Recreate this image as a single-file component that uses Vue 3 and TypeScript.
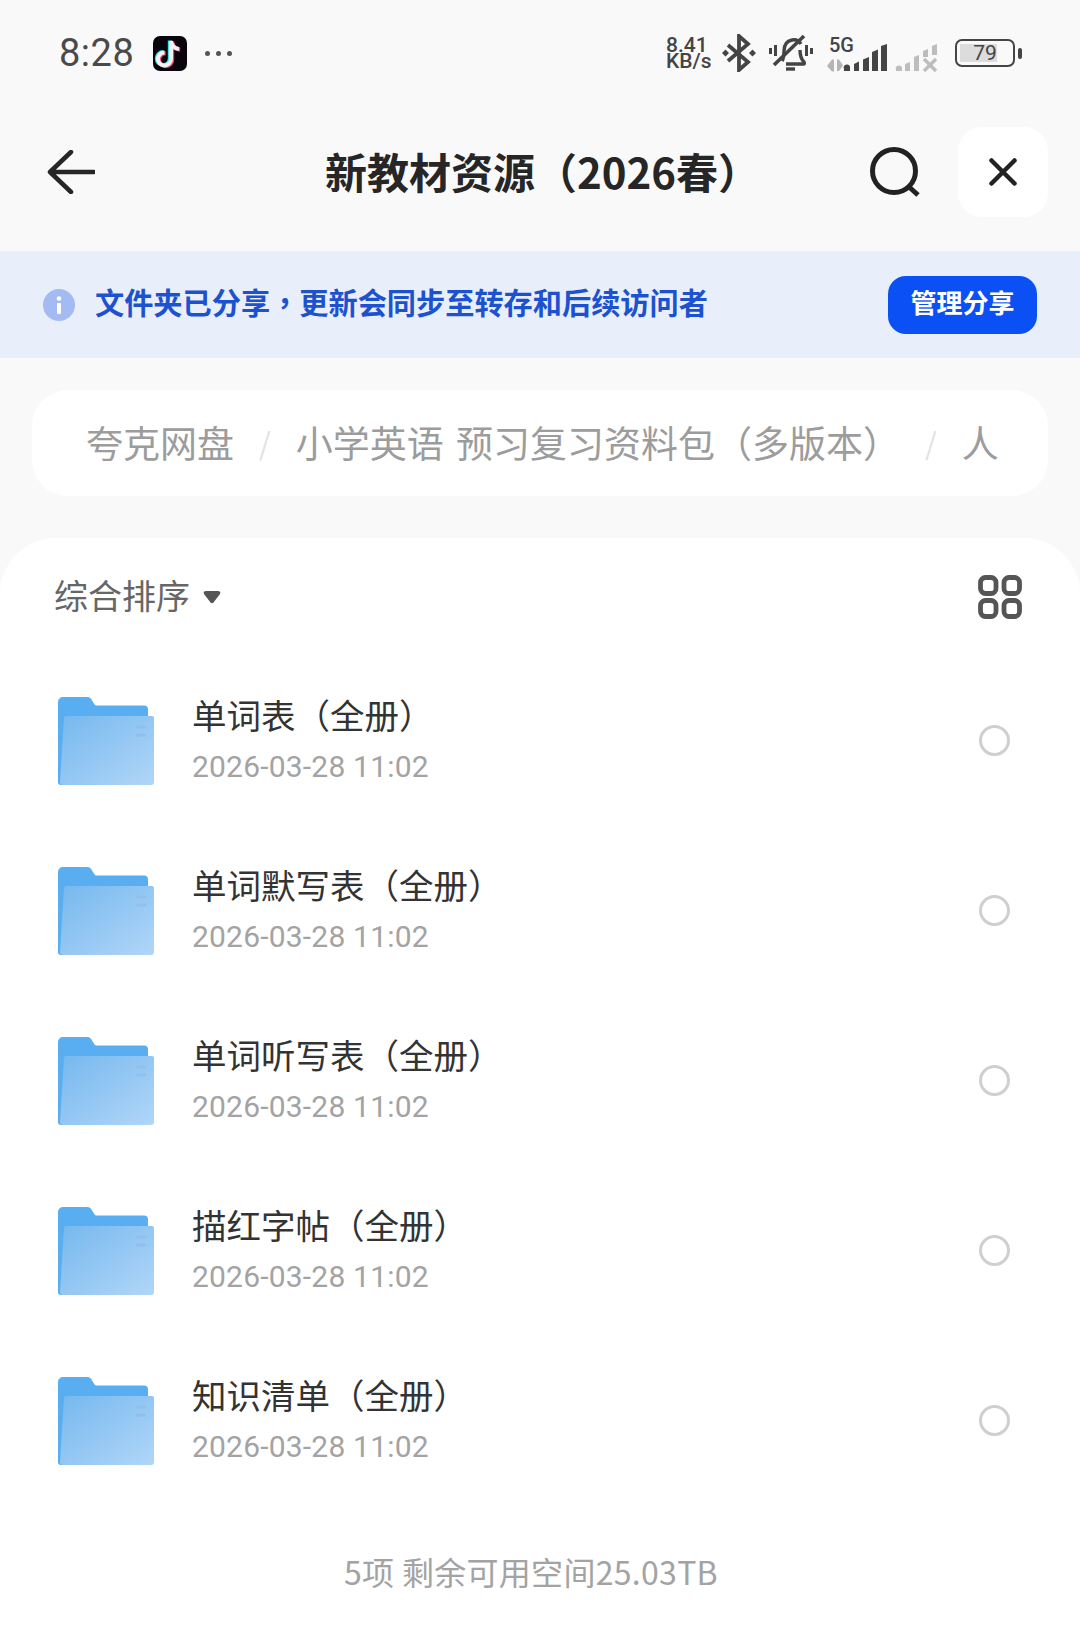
<script setup lang="ts">
const crumbs = ['夸克网盘', '小学英语 预习复习资料包（多版本）', '人']

const folders = [
  { name: '单词表（全册）', time: '2026-03-28 11:02' },
  { name: '单词默写表（全册）', time: '2026-03-28 11:02' },
  { name: '单词听写表（全册）', time: '2026-03-28 11:02' },
  { name: '描红字帖（全册）', time: '2026-03-28 11:02' },
  { name: '知识清单（全册）', time: '2026-03-28 11:02' },
]
</script>

<template>
  <div class="page">
    <div class="status-bar">
      <div class="status-left">
        <span class="clock">8:28</span>
        <svg class="tiktok" width="34" height="35" viewBox="0 0 34 35">
          <rect width="34" height="35" rx="7" fill="#08060c" />
          <g fill="none" stroke-width="4">
            <path d="M18 5v18a6.500 6.500 0 1 1-6.500-6.500M18 5c.6 4.500 3.500 7.500 8 8" stroke="#3fe0e6" transform="translate(-1.200 -.5)" />
            <path d="M18 5v18a6.500 6.500 0 1 1-6.500-6.500M18 5c.6 4.500 3.500 7.500 8 8" stroke="#f0406a" transform="translate(1.200 .8)" />
            <path d="M18 5v18a6.500 6.500 0 1 1-6.500-6.500M18 5c.6 4.500 3.500 7.500 8 8" stroke="#f6f1f3" />
          </g>
        </svg>
        <span class="dots"><i></i><i></i><i></i></span>
      </div>
      <div class="status-right">
        <div class="speed">8.41 KB/s</div>
        <svg class="bt" width="34" height="38" viewBox="0 0 34 38">
          <path d="M6 11l20 17-9 8V2l9 8L6 27" fill="none" stroke="#444" stroke-width="3.800" />
          <path d="M3.500 15.500L7 19l-3.500 3.500L0 19zM30.500 15.500L34 19l-3.500 3.500L27 19z" fill="#444" />
        </svg>
        <svg class="bell" width="44" height="38" viewBox="0 0 44 38">
          <path d="M13 27c2-3 2-6 2-10 0-6 3-10 8-11 4-1 7 1 9 4M31 16c0 5 1 9 4 12 1 2 0 2-2 2H17" fill="none" stroke="#444" stroke-width="3.400" />
          <path d="M5 31L35 2" stroke="#444" stroke-width="3.600" />
          <path d="M17 35h9" stroke="#444" stroke-width="3.400" />
          <path d="M1.500 14v6M6.500 11v11M37.500 11v11M42.500 14v6" stroke="#444" stroke-width="3" />
        </svg>
        <div class="sim">
          <span class="net">5G</span>
          <svg width="61" height="28" viewBox="0 0 61 28">
            <path d="M7 15.500v12H5l-5-5.500 5-6.500zM10 15.500h2l4 6-4 5.500h-2z" fill="#b5b5b5" />
            <path d="M17 27v-2a3 3 0 0 1 6-2.500V27zM27 20l5-2.500V27h-5zM36 15.500l6-2.500V27h-6zM45 8l6-2.500V27h-6zM54 2l6-2V27h-6z" fill="#444" />
          </svg>
        </div>
        <svg class="sim2" width="44" height="28" viewBox="0 0 44 28">
          <path d="M2 27v-1a3 3 0 0 1 6-2.500V27zM11 20l5-2v9h-5zM20 13l5-2v16h-5zM29 7l5-2v8h-5zM38 2l5-2v11h-5z" fill="#bdbdbd" />
          <path d="M30 15l12 12M42 15L30 27" stroke="#bdbdbd" stroke-width="3.400" />
        </svg>
        <div class="battery">
          <div class="cell"><span class="fill"></span><span class="level">79</span></div>
          <span class="tip"></span>
        </div>
      </div>
    </div>

    <header class="nav">
      <svg class="back" width="48" height="44" viewBox="0 0 48 44">
        <path d="M24 2L3 22l21 20M4 22h43" fill="none" stroke="#262626" stroke-width="4.500" stroke-linecap="round" stroke-linejoin="round" />
      </svg>
      <h1 class="title">新教材资源（2026春）</h1>
      <svg class="search" width="50" height="50" viewBox="0 0 50 50">
        <circle cx="24" cy="24" r="21.500" fill="none" stroke="#222" stroke-width="5" />
        <path d="M38 39l10 9" stroke="#222" stroke-width="5" />
      </svg>
      <button class="close" type="button" aria-label="关闭">
        <svg width="28" height="28" viewBox="0 0 28 28">
          <path d="M2.500 2.500l23 23M25.500 2.500l-23 23" stroke="#222" stroke-width="4.500" stroke-linecap="round" />
        </svg>
      </button>
    </header>

    <div class="banner">
      <svg width="32" height="32" viewBox="0 0 32 32">
        <circle cx="16" cy="16" r="16" fill="#a3baf3" />
        <rect x="14" y="14" width="4" height="11" rx="1" fill="#fff" />
        <circle cx="16" cy="9.500" r="2.300" fill="#fff" />
      </svg>
      <span class="banner-text">文件夹已分享<span class="mid-comma">，</span>更新会同步至转存和后续访问者</span>
      <button class="manage" type="button">管理分享</button>
    </div>

    <nav class="crumbs">
      <template v-for="(crumb, i) in crumbs" :key="crumb">
        <span v-if="i > 0" class="sep">/</span>
        <span class="crumb">{{ crumb }}</span>
      </template>
    </nav>

    <main class="sheet">
      <div class="toolbar">
        <div class="sort">
          <span class="sort-label">综合排序</span>
          <svg width="18" height="14" viewBox="0 0 18 14">
            <path d="M3 1h12c2 0 3 1.500 2 3l-6.500 8.500c-.8 1-2.200 1-3 0L1 4C0 2.500 1 1 3 1z" fill="#555" />
          </svg>
        </div>
        <svg width="44" height="44" viewBox="0 0 44 44">
          <g fill="none" stroke="#555" stroke-width="4.800">
            <rect x="2.500" y="2.500" width="15.500" height="16" rx="5" />
            <rect x="26" y="2.500" width="15.500" height="16" rx="5" />
            <rect x="2.500" y="25.500" width="15.500" height="16" rx="5" />
            <rect x="26" y="25.500" width="15.500" height="16" rx="5" />
          </g>
        </svg>
      </div>

      <ul class="list">
        <li v-for="folder in folders" :key="folder.name" class="row">
          <svg class="folder" width="96" height="88" viewBox="0 0 96 88">
            <defs>
              <linearGradient id="front" x1="0" y1="0" x2="1" y2="1">
                <stop offset="0" stop-color="#76b8ee" />
                <stop offset="1" stop-color="#b1d6f8" />
              </linearGradient>
            </defs>
            <path d="M0 5a5 5 0 0 1 5-5h24c3 0 4 1.500 5 3.500l2 3c.6 1.500 1.500 2 3 2h47a4 4 0 0 1 4 4V40H6v48H3a3 3 0 0 1-3-3z" fill="#58aef0" />
            <path d="M6 21a2 2 0 0 1 2-2h86a2 2 0 0 1 2 2v64a3 3 0 0 1-3 3H5a3 3 0 0 1-3-3z" fill="url(#front)" />
            <path d="M78 30h10M78 38h10" stroke="#8fc1ec" stroke-width="3" />
          </svg>
          <div class="info">
            <p class="name">{{ folder.name }}</p>
            <p class="time">{{ folder.time }}</p>
          </div>
          <span class="radio"></span>
        </li>
      </ul>

      <p class="summary">5项 剩余可用空间25.03TB</p>
    </main>
  </div>
</template>

<style>
html,
body {
  margin: 0;
  background: #f9f9f9;
}
</style>

<style scoped>
.page {
  width: 1080px;
  height: 1632px;
  display: flex;
  flex-direction: column;
  overflow: hidden;
  background: #f9f9f9;
  font-family: "Noto Sans CJK SC", sans-serif;
}

.status-bar {
  height: 106px;
  margin-bottom: -6px;
  box-sizing: border-box;
  padding: 0 58px 0 59px;
  display: flex;
  justify-content: space-between;
  align-items: center;
}

.status-left {
  display: flex;
  align-items: center;
}

.clock {
  font-family: Roboto, sans-serif;
  font-size: 38px;
  color: #4a4a4a;
  width: 94px;
  letter-spacing: 0.5px;
}

.dots {
  display: flex;
  gap: 6px;
  margin-left: 18px;
}

.dots i {
  width: 5px;
  height: 5px;
  border-radius: 50%;
  background: #555;
}

.status-right {
  display: flex;
  align-items: center;
}

.speed {
  width: 46px;
  font-family: Roboto, sans-serif;
  font-size: 21px;
  line-height: 16px;
  font-weight: 500;
  color: #444;
}

.bt {
  margin-left: 10px;
}

.bell {
  margin-left: 13px;
}

.sim {
  position: relative;
  margin-left: 14px;
  padding-top: 10px;
}

.sim svg {
  display: block;
}

.net {
  position: absolute;
  left: 2px;
  top: 1px;
  font-family: Roboto, sans-serif;
  font-size: 20px;
  line-height: 20px;
  font-weight: 500;
  color: #444;
}

.sim2 {
  margin-left: 6px;
  margin-top: 10px;
}

.battery {
  display: flex;
  align-items: center;
  margin-left: 17px;
}

.cell {
  position: relative;
  width: 60px;
  height: 28px;
  box-sizing: border-box;
  border: 2.500px solid #444;
  border-radius: 7px;
  display: flex;
  align-items: center;
  justify-content: center;
}

.fill {
  position: absolute;
  left: 3px;
  top: 3px;
  bottom: 3px;
  width: 37px;
  background: #dcdcdc;
}

.level {
  position: relative;
  font-family: Roboto, sans-serif;
  font-size: 21px;
  color: #444;
}

.tip {
  width: 4px;
  height: 11px;
  margin-left: 3px;
  background: #444;
  border-radius: 2px;
}

.nav {
  height: 151px;
  flex: none;
  display: flex;
  align-items: center;
  box-sizing: border-box;
  padding: 0 32px 8px 47px;
}

.back {
  flex: none;
}

.title {
  flex: 1;
  margin: 0;
  padding: 0 0 2px 120px;
  box-sizing: border-box;
  text-align: center;
  font-size: 42px;
  font-weight: 700;
  color: #262626;
  white-space: nowrap;
}

.search {
  flex: none;
  margin-right: 38px;
}

.close {
  flex: none;
  width: 90px;
  height: 90px;
  border: none;
  border-radius: 24px;
  background: #fff;
  display: flex;
  align-items: center;
  justify-content: center;
  padding: 0;
}

.banner {
  height: 107px;
  flex: none;
  display: flex;
  align-items: center;
  padding: 0 43px;
  background: #e9eefb;
}

.banner-text {
  margin-left: 20px;
  padding-bottom: 7px;
  font-size: 29.200px;
  font-weight: 700;
  color: #1c52cf;
  white-space: nowrap;
}

.mid-comma {
  font-family: "Noto Sans CJK TC", sans-serif;
}

.manage {
  margin-left: auto;
  width: 149px;
  height: 58px;
  padding: 0 0 6px;
  border: none;
  border-radius: 18px;
  background: #0b50f4;
  color: #fff;
  font-family: inherit;
  font-size: 26px;
  font-weight: 700;
}

.crumbs {
  flex: none;
  margin: 32px 32px 0;
  height: 106px;
  box-sizing: border-box;
  padding: 0 0 2px 54px;
  border-radius: 36px;
  background: #fff;
  display: flex;
  align-items: center;
  overflow: hidden;
  white-space: nowrap;
  font-size: 37px;
  word-spacing: 4px;
  color: #9c9c9c;
}

.sep {
  margin: 0 25px;
  font-size: 30px;
  color: #e2e2e2;
}

.sheet {
  flex: 1;
  margin-top: 42px;
  background: #fff;
  border-radius: 56px 56px 0 0;
}

.toolbar {
  height: 118px;
  box-sizing: border-box;
  padding: 0 58px 0 54px;
  display: flex;
  align-items: center;
  justify-content: space-between;
}

.sort {
  display: flex;
  align-items: center;
  gap: 13px;
  font-size: 34px;
  color: #666;
}

.sort-label {
  padding-bottom: 5px;
}

.list {
  list-style: none;
  margin: 0;
  padding: 0;
}

.row {
  height: 170px;
  box-sizing: border-box;
  padding: 0 70px 0 58px;
  display: flex;
  align-items: center;
}

.folder {
  flex: none;
}

.info {
  flex: 1;
  margin-left: 38px;
  margin-top: -2px;
}

.name {
  margin: 0;
  font-size: 34.500px;
  line-height: 46px;
  color: #333;
}

.time {
  margin: 8px 0 0;
  font-family: Roboto, sans-serif;
  font-size: 30px;
  line-height: 44px;
  letter-spacing: 0.2px;
  color: #a3a3a3;
}

.radio {
  flex: none;
  width: 31px;
  height: 31px;
  margin-top: -2px;
  box-sizing: border-box;
  border: 3px solid #cfcfcf;
  border-radius: 50%;
}

.summary {
  margin: 42px 18px 0 0;
  text-align: center;
  font-size: 32px;
  line-height: 46px;
  letter-spacing: 0.3px;
  color: #a3a3a3;
}
</style>
